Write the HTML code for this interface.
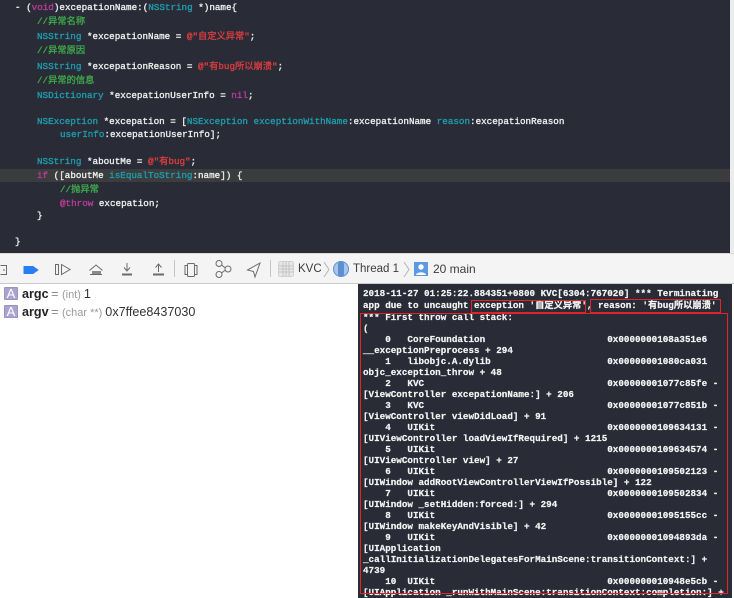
<!DOCTYPE html>
<html><head><meta charset="utf-8">
<style>
html,body{margin:0;padding:0;background:#fff}
#p{position:relative;width:734px;height:598px;overflow:hidden;background:#fff;font-family:"Liberation Sans","Noto Sans CJK SC",sans-serif}
.l{position:absolute;white-space:pre;font-family:"Liberation Mono","Noto Sans CJK SC",monospace;font-size:9.25px;line-height:12px;height:12px}
#code .l{color:#ececec;-webkit-text-stroke:.35px currentColor;filter:blur(.25px)}
#con .l{color:#f4f4f4;font-weight:bold;left:363px;-webkit-text-stroke:.2px currentColor;filter:blur(.25px)}
.t{color:#1f9bac}.k{color:#b83a96}.r{color:#d83c40}
#code .l.g{color:#3fa64c}
.box{position:absolute;border:1.5px solid #e0242a;box-sizing:border-box}
.tb{position:absolute;font-size:12px;color:#3c3c3c;line-height:14px;white-space:pre;filter:blur(.2px)}
.av{position:absolute;left:4px;width:14px;height:13px;background:#aaa3cf;border:1px solid #9b93c4;box-sizing:border-box;color:#fff;font-size:13px;line-height:11px;text-align:center;border-radius:1px}
.v{position:absolute;left:22px;font-size:12.6px;line-height:14px;color:#333;white-space:pre;filter:blur(.2px)}
.v b{color:#222;margin-right:-1px}.v i{font-style:normal;color:#8a8a8a}.v s{text-decoration:none;color:#9a9a9a;font-size:11px;margin-right:-.5px}
svg{position:absolute;left:0;top:0}
</style></head><body><div id="p">
<div id="code" style="position:absolute;left:0;top:0;width:730px;height:253px;background:#292c36">
<div style="position:absolute;left:0;top:169px;width:730px;height:13px;background:#3b3c3d"></div>
<div class="l" style="left:15px;top:1.5px">- (<span class="k">void</span>)excepationName:(<span class="t">NSString</span> *)name{</div>
<div class="l g" style="left:37px;top:15.5px">//异常名称</div>
<div class="l" style="left:37px;top:30.5px"><span class="t">NSString</span> *excepationName = <span class="r">@"自定义异常"</span>;</div>
<div class="l g" style="left:37px;top:44.5px">//异常原因</div>
<div class="l" style="left:37px;top:60.5px"><span class="t">NSString</span> *excepationReason = <span class="r">@"有bug所以崩溃"</span>;</div>
<div class="l g" style="left:37px;top:75px">//异常的信息</div>
<div class="l" style="left:37px;top:89.5px"><span class="t">NSDictionary</span> *excepationUserInfo = <span class="k">nil</span>;</div>
<div class="l" style="left:37px;top:115.5px"><span class="t">NSException</span> *excepation = [<span class="t">NSException</span> <span class="t">exceptionWithName</span>:excepationName <span class="t">reason</span>:excepationReason</div>
<div class="l" style="left:60px;top:128.5px"><span class="t">userInfo</span>:excepationUserInfo];</div>
<div class="l" style="left:37px;top:155.5px"><span class="t">NSString</span> *aboutMe = <span class="r">@"有bug"</span>;</div>
<div class="l" style="left:37px;top:169.5px"><span class="k">if</span> ([aboutMe <span class="t">isEqualToString</span>:name]) {</div>
<div class="l g" style="left:60px;top:183.5px">//抛异常</div>
<div class="l" style="left:60px;top:197.5px"><span class="k">@throw</span> excepation;</div>
<div class="l" style="left:37px;top:209.5px">}</div>
<div class="l" style="left:15px;top:235.5px">}</div>
</div>
<div style="position:absolute;left:730px;top:0;width:4px;height:254px;background:#ececec"></div>
<div style="position:absolute;left:0;top:253px;width:734px;height:30px;background:#f4f4f4;border-top:1px solid #d8d8d8;box-sizing:border-box"></div>
<div style="position:absolute;left:0;top:283px;width:734px;height:1px;background:#c9c9c9"></div>
<svg width="734" height="598" viewBox="0 0 734 598" fill="none" stroke="#6b6b6b" stroke-width="1">
<path d="M0.5 265.5H6.5V274.5H0.5M3 270H5"/>
<path d="M24 266.5H33L38 270L33 273.5H24Z" fill="#2a7ef2" stroke="#2a7ef2" stroke-linejoin="round"/>
<rect x="55.5" y="264.5" width="3" height="10"/><path d="M61.5 264.5L70 269.5L61.5 274.5Z"/>
<path d="M89.5 270.5L96 265L102.5 270.5"/><path d="M92.5 271.5H100.5V274.5H92.5Z" fill="#8a8a8a" stroke="#8a8a8a"/><path d="M90 274.5H102"/>
<path d="M127 263V270M124 267.5L127 271L130 267.5"/><path d="M122 274.5H132" stroke-width="2"/>
<path d="M158.5 272V264.5M155.5 267.5L158.5 264L161.5 267.5"/><path d="M153 274.5H164" stroke-width="2"/>
<path d="M174.5 260V277" stroke="#c4c4c4"/>
<rect x="187.5" y="263.5" width="7" height="13" rx="1"/><path d="M187 265.5H185V274.5H187M195 265.5H197V274.5H195"/>
<circle cx="219" cy="263.5" r="3"/><circle cx="219" cy="274.5" r="3"/><circle cx="228" cy="269" r="3"/><path d="M221.5 265L225.5 268M221.5 273L225.5 270"/>
<path d="M260 263L247.5 270L253.5 271.5L255 277Z"/>
<path d="M270.5 260V277" stroke="#c4c4c4"/>
<rect x="278.5" y="261.5" width="15" height="15" rx="2" stroke="#cfcfcf" fill="#e9e9e9"/><path d="M279 266H293M279 269H293M279 272H293M283 262V276M286 262V276M289 262V276" stroke="#c4c4c4"/>
<path d="M324 262L329 269.5L324 277M404 262L409 269.5L404 277" stroke="#b5b5b5"/>
<circle cx="341" cy="269" r="7.5" fill="#a9c6ea" stroke="#5b8fcf"/><rect x="338" y="262" width="6" height="14" rx="2" fill="#5b8fd0" stroke="none"/>
<rect x="414" y="262" width="14" height="14" fill="#5b9ae0" stroke="none"/><circle cx="421" cy="267" r="2.7" fill="#fff" stroke="none"/><path d="M416 275C416.5 271.5 425.5 271.5 426 275Z" fill="#fff" stroke="none"/>
</svg>
<div class="tb" style="left:298px;top:262px;font-size:11.5px">KVC</div>
<div class="tb" style="left:353px;top:262px;font-size:11.5px">Thread 1</div>
<div class="tb" style="left:433px;top:262px">20 main</div>
<div class="av" style="top:287px">A</div>
<div class="v" style="top:287px"><b>argc</b> <i>=</i> <s>(int)</s> 1</div>
<div class="av" style="top:305px">A</div>
<div class="v" style="top:305px"><b>argv</b> <i>=</i> <s>(char **)</s> 0x7ffee8437030</div>
<div id="con" style="position:absolute;left:0;top:0;width:734px;height:598px">
<div style="position:absolute;left:358px;top:284px;width:374px;height:314px;background:#292c36"></div>
<div class="l" style="top:288px">2018-11-27 01:25:22.884351+0800 KVC[6304:767020] *** Terminating</div>
<div class="l" style="top:300px">app due to uncaught exception '自定义异常', reason: '有bug所以崩溃'</div>
<div class="l" style="top:312px">*** First throw call stack:</div>
<div class="l" style="top:323px">(</div>
<div class="l" style="top:334px">    0   CoreFoundation                      0x0000000108a351e6</div>
<div class="l" style="top:345px">__exceptionPreprocess + 294</div>
<div class="l" style="top:356px">    1   libobjc.A.dylib                     0x00000001080ca031</div>
<div class="l" style="top:367px">objc_exception_throw + 48</div>
<div class="l" style="top:378px">    2   KVC                                 0x00000001077c85fe -</div>
<div class="l" style="top:389px">[ViewController excepationName:] + 206</div>
<div class="l" style="top:400px">    3   KVC                                 0x00000001077c851b -</div>
<div class="l" style="top:411px">[ViewController viewDidLoad] + 91</div>
<div class="l" style="top:422px">    4   UIKit                               0x0000000109634131 -</div>
<div class="l" style="top:433px">[UIViewController loadViewIfRequired] + 1215</div>
<div class="l" style="top:444px">    5   UIKit                               0x0000000109634574 -</div>
<div class="l" style="top:455px">[UIViewController view] + 27</div>
<div class="l" style="top:466px">    6   UIKit                               0x0000000109502123 -</div>
<div class="l" style="top:477px">[UIWindow addRootViewControllerViewIfPossible] + 122</div>
<div class="l" style="top:488px">    7   UIKit                               0x0000000109502834 -</div>
<div class="l" style="top:499px">[UIWindow _setHidden:forced:] + 294</div>
<div class="l" style="top:510px">    8   UIKit                               0x00000001095155cc -</div>
<div class="l" style="top:521px">[UIWindow makeKeyAndVisible] + 42</div>
<div class="l" style="top:532px">    9   UIKit                               0x00000001094893da -</div>
<div class="l" style="top:543px">[UIApplication</div>
<div class="l" style="top:554px">_callInitializationDelegatesForMainScene:transitionContext:] +</div>
<div class="l" style="top:565px">4739</div>
<div class="l" style="top:576px">    10  UIKit                               0x000000010948e5cb -</div>
<div class="l" style="top:587px">[UIApplication _runWithMainScene:transitionContext:completion:] +</div>
<div class="box" style="left:471px;top:300px;width:115px;height:13px"></div>
<div class="box" style="left:590px;top:299px;width:131px;height:14px"></div>
<div class="box" style="left:360px;top:313px;width:368px;height:281px"></div>
</div>
</div></body></html>
